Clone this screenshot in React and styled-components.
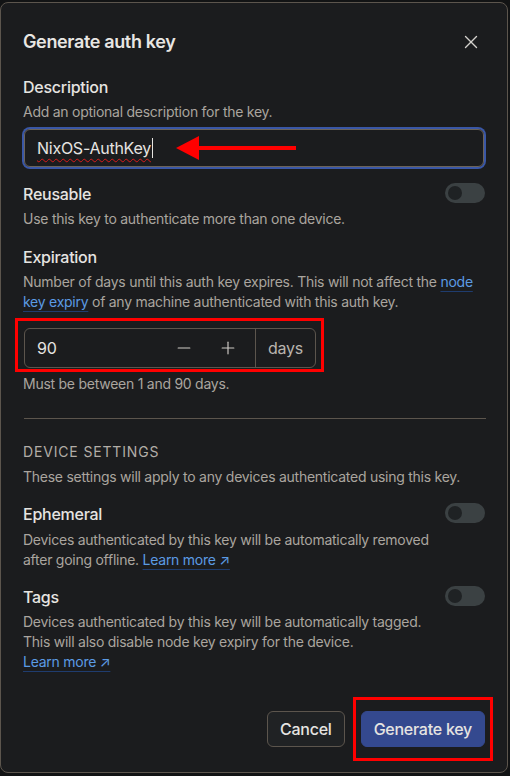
import React from 'react';
import styled, { createGlobalStyle } from 'styled-components';
import { X, Minus, Plus } from 'lucide-react';

const GlobalStyle = createGlobalStyle`
  html, body {
    margin: 0;
    padding: 0;
    background: #121314;
  }
  body {
    font-family: Inter, "Noto Sans", sans-serif;
    letter-spacing: -0.016em;
    -webkit-font-smoothing: antialiased;
  }
`;

const Dialog = styled.div`
  box-sizing: border-box;
  width: 508px;
  height: 771px;
  margin-top: 2px;
  border: 1px solid #5c554d;
  border-radius: 8px;
  background: #1b1c1e;
  padding: 25px 22px 24px 22px;
  display: flex;
  flex-direction: column;
  color: #e6e4e1;
`;

const Header = styled.div`
  display: flex;
  align-items: center;
  justify-content: space-between;
  height: 28px;
  margin-bottom: 19px;
`;

const Title = styled.h2`
  margin: 0;
  font-size: 18px;
  line-height: 28px;
  font-weight: 600;
  letter-spacing: -0.02em;
  color: #e8e6e3;
`;

const CloseButton = styled.button`
  background: none;
  border: none;
  padding: 0;
  margin-right: 3px;
  color: #d4d1cd;
  display: flex;
  cursor: pointer;
`;

const Field = styled.div`
  display: flex;
  gap: 12px;
  margin-top: ${p => p.$top || 16}px;
`;

const FieldText = styled.div`
  flex: 1;
  min-width: 0;
`;

const Label = styled.div`
  font-size: 16px;
  line-height: 24px;
  font-weight: 500;
  color: #e6e4e1;
`;

const Help = styled.div`
  font-size: 14px;
  line-height: 20px;
  color: #aaa59f;
  margin-top: ${p => p.$top || 3}px;
`;

const Link = styled.a`
  color: #5b9be4;
  text-decoration: underline;
  text-decoration-color: #1f3c6e;
  text-underline-offset: 4px;
  text-decoration-thickness: 1px;
`;

const Highlight = styled.div`
  position: relative;
  align-self: ${p => p.$align || 'stretch'};
  &::after {
    content: '';
    position: absolute;
    top: ${p => p.$t}px;
    left: ${p => p.$l}px;
    right: ${p => p.$r}px;
    bottom: ${p => p.$b}px;
    border: 3px solid #ff0000;
    pointer-events: none;
  }
`;

const TextInput = styled.div`
  position: relative;
  margin-top: 7px;
  box-sizing: border-box;
  height: 38px;
  margin-left: 1px;
  margin-right: 1px;
  border: 1px solid #6b635a;
  border-radius: 6px;
  box-shadow: 0 0 0 2px #3a57a6;
  display: flex;
  align-items: center;
  padding: 0 12px;
  font-size: 16px;
  color: #e6e4e1;
`;

const Typed = styled.span`
  text-decoration: underline wavy #d81b1b;
  text-decoration-thickness: 1px;
  text-underline-offset: 4px;
`;

const Caret = styled.span`
  display: inline-block;
  width: 1px;
  height: 20px;
  background: #e6e4e1;
  vertical-align: middle;
  margin-left: 1px;
`;

const Arrow = styled.svg`
  position: absolute;
  left: 151px;
  top: 5px;
`;

const Toggle = styled.div`
  flex: none;
  box-sizing: border-box;
  width: 40px;
  height: 20px;
  margin-top: 1px;
  border-radius: 10px;
  background: #3b4143;
  position: relative;
  &::after {
    content: '';
    position: absolute;
    top: 3px;
    left: 3px;
    width: 14px;
    height: 14px;
    border-radius: 50%;
    background: #1f2224;
  }
`;

const NumberBox = styled.div`
  box-sizing: border-box;
  width: 292px;
  height: 40px;
  border: 1px solid #5c554d;
  border-radius: 6px;
  display: flex;
  align-items: stretch;
  font-size: 16px;
  color: #e6e4e1;
`;

const NumberValue = styled.div`
  flex: 1;
  display: flex;
  align-items: center;
  padding-left: 12px;
`;

const StepButton = styled.button`
  width: 44px;
  background: none;
  border: none;
  padding: 0;
  color: #cfcbc6;
  display: flex;
  align-items: center;
  justify-content: center;
`;

const Suffix = styled.div`
  width: 59px;
  border-left: 1px solid #5c554d;
  display: flex;
  align-items: center;
  justify-content: center;
  color: #b9b4ae;
  margin-left: 5px;
`;

const Divider = styled.hr`
  border: none;
  border-top: 1px solid #5c554d;
  margin: 24px 0 0 1px;
  width: 462px;
`;

const SectionTitle = styled.div`
  margin-top: 23px;
  font-size: 14px;
  line-height: 20px;
  letter-spacing: 0.06em;
  text-transform: uppercase;
  color: #b2ada7;
`;

const Footer = styled.div`
  margin-top: auto;
  display: flex;
  justify-content: flex-end;
  gap: 16px;
  padding-bottom: 1px;
`;

const Button = styled.button`
  height: 36px;
  box-sizing: border-box;
  padding: 0 12px;
  border-radius: 6px;
  font-family: Inter, "Noto Sans", sans-serif;
  letter-spacing: -0.016em;
  font-size: 16px;
  font-weight: 500;
  color: #e6e4e1;
  border: 1px solid ${p => (p.$primary ? '#34498f' : '#5c554d')};
  background: ${p => (p.$primary ? '#34498f' : '#202224')};
`;

export default function App() {
  return (
    <>
      <GlobalStyle />
      <Dialog>
        <Header>
          <Title>Generate auth key</Title>
          <CloseButton aria-label="Close">
            <X size={22} strokeWidth={1.5} />
          </CloseButton>
        </Header>

        <Label>Description</Label>
        <Help>Add an optional description for the key.</Help>
        <TextInput>
          <Typed>NixOS-AuthKey</Typed>
          <Caret />
          <Arrow width="122" height="26" viewBox="0 0 122 26">
            <line x1="20" y1="13" x2="120" y2="13" stroke="#ff0000" strokeWidth="4" />
            <polygon points="0,13 23,1 23,25" fill="#ff0000" />
          </Arrow>
        </TextInput>

        <Field $top={15}>
          <FieldText>
            <Label>Reusable</Label>
            <Help>Use this key to authenticate more than one device.</Help>
          </FieldText>
          <Toggle />
        </Field>

        <Field $top={16}>
          <FieldText>
            <Label>Expiration</Label>
            <Help>
              Number of days until this auth key expires. This will not affect the{' '}
              <Link>node key expiry</Link> of any machine authenticated with this auth key.
            </Help>
          </FieldText>
        </Field>

        <Highlight $align="flex-start" $t={-10} $l={-9} $r={-8} $b={-4} style={{ marginTop: 16, marginLeft: 1 }}>
          <NumberBox>
            <NumberValue>90</NumberValue>
            <StepButton aria-label="Decrease">
              <Minus size={20} strokeWidth={1.4} />
            </StepButton>
            <StepButton aria-label="Increase">
              <Plus size={20} strokeWidth={1.4} />
            </StepButton>
            <Suffix>days</Suffix>
          </NumberBox>
        </Highlight>
        <Help $top={6}>Must be between 1 and 90 days.</Help>

        <Divider />

        <SectionTitle>Device settings</SectionTitle>
        <Help $top={5}>These settings will apply to any devices authenticated using this key.</Help>

        <Field $top={15}>
          <FieldText>
            <Label>Ephemeral</Label>
            <Help $top={4}>
              Devices authenticated by this key will be automatically removed after going
              offline. <Link>Learn more ↗</Link>
            </Help>
          </FieldText>
          <Toggle />
        </Field>

        <Field $top={15}>
          <FieldText>
            <Label>Tags</Label>
            <Help>
              Devices authenticated by this key will be automatically tagged. This will also
              disable node key expiry for the device.
              <br />
              <Link>Learn more ↗</Link>
            </Help>
          </FieldText>
          <Toggle />
        </Field>

        <Footer>
          <Button>Cancel</Button>
          <Highlight $t={-14} $l={-8} $r={-8} $b={-14}>
            <Button $primary>Generate key</Button>
          </Highlight>
        </Footer>
      </Dialog>
    </>
  );
}
